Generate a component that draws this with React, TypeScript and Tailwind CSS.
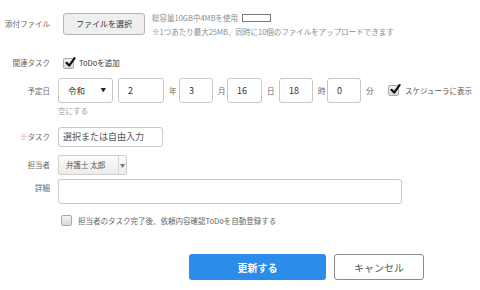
import React from "react";

const font = { fontFamily: '"Noto Sans CJK JP", "Noto Sans", sans-serif' };

function Check({ checked }: { checked: boolean }) {
  return (
    <div className="relative w-[11px] h-[11px] shrink-0 rounded-[2px] border border-[#a9a9a9] bg-gradient-to-b from-[#f4f4f4] to-[#d8d8d8]">
      {checked && (
        <svg className="absolute left-[1px] top-[-2px]" width="11" height="11" viewBox="0 0 11 11">
          <path d="M1.5 5.8 L4.2 8.6 L9.6 1.2" fill="none" stroke="#111" strokeWidth="2.2" strokeLinecap="round" strokeLinejoin="round" />
        </svg>
      )}
    </div>
  );
}

function NumInput({ value, w }: { value: string; w: string }) {
  return (
    <div className={`${w} h-[25px] shrink-0 rounded-[3px] border border-[#c8c8c8] bg-white flex items-center pl-[9px] text-[9px] text-[#333]`}>
      {value}
    </div>
  );
}

function Unit({ t, ml, mr }: { t: string; ml: string; mr: string }) {
  return <span className={`${ml} ${mr} w-[8px] text-[7.5px] text-[#666] leading-none shrink-0`}>{t}</span>;
}

function Label({ children, className = "" }: { children: React.ReactNode; className?: string }) {
  return <div className={`w-[50px] shrink-0 text-right text-[7.5px] text-[#666] leading-none ${className}`}>{children}</div>;
}

export default function App() {
  return (
    <div style={font} className="w-[480px] h-[290px] bg-white overflow-hidden flex flex-col">
      {/* attachments */}
      <div className="mt-[13px] flex">
        <Label className="h-[22px] flex items-center justify-end">添付ファイル</Label>
        <div className="ml-[13px] w-[82px] h-[22px] shrink-0 rounded-[3px] border border-[#b5b5b5] bg-[#efefef] flex items-center justify-center text-[8px] text-[#333]">
          ファイルを選択
        </div>
        <div className="ml-[7px] flex flex-col">
          <div className="h-[10px] flex items-center text-[7.5px] text-[#8a8a8a] leading-none">
            <span>総容量10GB中4MBを使用</span>
            <span className="ml-[4px] w-[29px] h-[8px] border border-[#777] bg-white" />
          </div>
          <div className="mt-[4px] h-[10px] flex items-center text-[7.5px] text-[#8a8a8a] leading-none whitespace-nowrap">
            ※1つあたり最大25MB、同時に10個のファイルをアップロードできます
          </div>
        </div>
      </div>

      {/* related task */}
      <div className="mt-[20px] h-[12px] flex items-center">
        <Label>関連タスク</Label>
        <div className="ml-[13px]">
          <Check checked />
        </div>
        <span className="ml-[5px] text-[7.5px] text-[#333] leading-none">ToDoを追加</span>
      </div>

      {/* date */}
      <div className="mt-[9px] h-[25px] flex items-center">
        <Label>予定日</Label>
        <div className="ml-[8px] w-[55px] h-[25px] shrink-0 rounded-[3px] border border-[#c8c8c8] bg-white flex items-center justify-between pl-[9px] pr-[6px] text-[8.5px] text-[#333]">
          <span>令和</span>
          <span className="text-[5.5px] text-[#222]">▼</span>
        </div>
        <div className="ml-[5px]" />
        <NumInput value="2" w="w-[46px]" />
        <Unit t="年" ml="ml-[5px]" mr="mr-[2px]" />
        <NumInput value="3" w="w-[34px]" />
        <Unit t="月" ml="ml-[5px]" mr="mr-[1px]" />
        <NumInput value="16" w="w-[35px]" />
        <Unit t="日" ml="ml-[5px]" mr="mr-[4px]" />
        <NumInput value="18" w="w-[34px]" />
        <Unit t="時" ml="ml-[5px]" mr="mr-[1px]" />
        <NumInput value="0" w="w-[34px]" />
        <Unit t="分" ml="ml-[5px]" mr="mr-[14px]" />
        <Check checked />
        <span className="ml-[6px] text-[7.5px] text-[#555] leading-none whitespace-nowrap">スケジューラに表示</span>
      </div>
      <div className="mt-[3px] h-[10px] flex items-center">
        <div className="ml-[58px] text-[7.5px] text-[#8fa3ad] leading-none">空にする</div>
      </div>

      {/* task */}
      <div className="mt-[11px] h-[20px] flex items-center">
        <Label>
          <span className="text-[#f28b8b]">※</span>タスク
        </Label>
        <div className="ml-[8px] w-[105px] h-[20px] rounded-[3px] border border-[#c8c8c8] bg-white flex items-center pl-[4px] text-[9px] text-[#555]">
          選択または自由入力
        </div>
      </div>

      {/* assignee */}
      <div className="mt-[8px] h-[20px] flex items-center">
        <Label>担当者</Label>
        <div className="ml-[8px] w-[69px] h-[20px] rounded-[2px] border border-[#cfcfcf] bg-gradient-to-b from-[#fbfbfb] to-[#ececec] flex items-center">
          <span className="pl-[7px] w-[59px] text-[7.5px] text-[#555] leading-none">弁護士 太郎</span>
          <span className="h-[18px] w-px bg-[#d6d6d6]" />
          <span className="flex-1 flex justify-center text-[5px] text-[#777]">▼</span>
        </div>
      </div>

      {/* details */}
      <div className="mt-[4px] flex">
        <Label className="pt-[5px]">詳細</Label>
        <div className="ml-[8px] w-[344px] h-[25px] rounded-[3px] border border-[#c8c8c8] bg-white" />
      </div>

      {/* auto register */}
      <div className="mt-[11px] h-[11px] flex items-center">
        <div className="ml-[61px]">
          <Check checked={false} />
        </div>
        <span className="ml-[6px] text-[7.5px] text-[#666] leading-none whitespace-nowrap">
          担当者のタスク完了後、依頼内容確認ToDoを自動登録する
        </span>
      </div>

      {/* buttons */}
      <div className="mt-[28px] flex">
        <div className="ml-[189px] w-[137px] h-[26px] rounded-[3px] bg-[#2b8de9] flex items-center justify-center text-[10px] font-semibold text-white">
          更新する
        </div>
        <div className="ml-[8px] w-[90px] h-[26px] rounded-[3px] border-[1.5px] border-[#8a8a8a] bg-white flex items-center justify-center text-[10px] text-[#555]">
          キャンセル
        </div>
      </div>
    </div>
  );
}
